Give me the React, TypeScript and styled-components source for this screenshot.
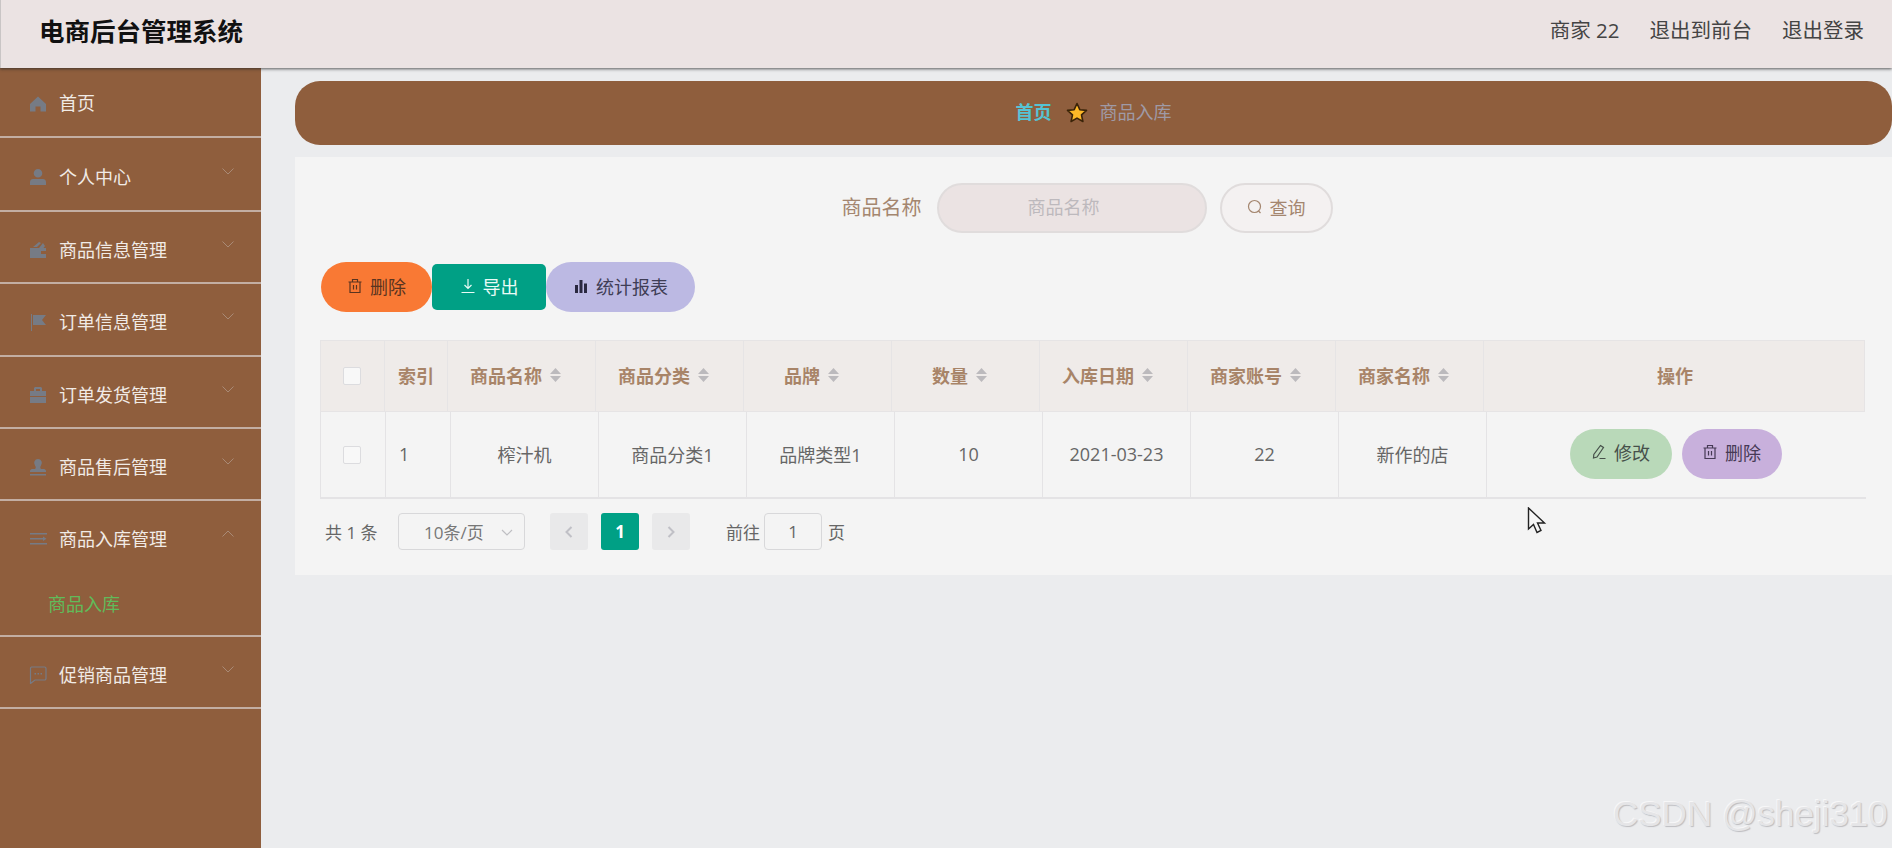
import React from 'react';
import styled, { createGlobalStyle } from 'styled-components';

const GlobalStyle = createGlobalStyle`
  html, body {
    margin: 0;
    padding: 0;
    height: 100%;
    overflow: hidden;
    background: #ebecee;
    font-family: "Open Sans", "Noto Sans CJK SC", sans-serif;
  }
  * { box-sizing: border-box; }
`;

const Root = styled.div`
  position: relative;
  display: flex;
  flex-direction: column;
  width: 1892px;
  height: 848px;
  overflow: hidden;
`;

const TopBar = styled.header`
  position: relative;
  z-index: 2;
  display: flex;
  align-items: center;
  justify-content: space-between;
  height: 68px;
  flex: none;
  padding: 0 28px 10px 38px;
  background: #ebe3e3;
  border-left: 1px solid #c9c5c5;
  box-shadow: 0 1px 3px rgba(40, 40, 40, 0.75);
`;

const Title = styled.div`
  font-size: 25.5px;
  font-weight: 700;
  color: #111;
`;

const TopLinks = styled.div`
  display: flex;
  gap: 30px;
  font-size: 20.5px;
  color: #444;
`;

const Body = styled.div`
  display: flex;
  flex: 1;
  min-height: 0;
`;

const Sidebar = styled.nav`
  width: 261px;
  flex: none;
  background: #8f5e3d;
`;

const MenuItem = styled.div<{ $h: number }>`
  height: ${(p) => p.$h}px;
  border-bottom: 2px solid #c3aea3;
`;

const MenuRow = styled.div<{ $h: number; $pt: number }>`
  display: flex;
  align-items: center;
  height: ${(p) => p.$h}px;
  padding: ${(p) => p.$pt}px 27px 0 29px;
  font-size: 18px;
  color: #f1ebe6;
`;

const MenuIcon = styled.svg`
  width: 18px;
  height: 18px;
  margin-right: 12px;
  fill: #767b85;
  flex: none;
`;

const MenuLabel = styled.span`
  flex: 1;
  margin-bottom: 3px;
`;

const Chevron = styled.svg`
  width: 12px;
  height: 7px;
  margin-bottom: 12px;
  fill: none;
  stroke: #a98a76;
  stroke-width: 1;
`;

const SubRow = styled.div`
  height: 62px;
  padding-left: 48px;
  line-height: 62px;
  font-size: 18px;
  color: #61bb5a;
`;

const Main = styled.main`
  flex: 1;
  min-width: 0;
  display: flex;
  flex-direction: column;
  padding: 13px 0 0 34px;
`;

const Crumbs = styled.div`
  display: flex;
  align-items: center;
  justify-content: center;
  height: 64px;
  padding: 0 0 5px 0;
  border-radius: 25px;
  background: #8f5e3d;
  font-size: 18px;
`;

const CrumbHome = styled.span`
  font-weight: 700;
  color: #55c3d4;
`;

const CrumbStar = styled.svg`
  width: 22px;
  height: 22px;
  margin: 4px 12px 0 14px;
`;

const CrumbCurrent = styled.span`
  color: #9f9aa6;
`;

const Card = styled.section`
  margin-top: 12px;
  height: 418px;
  padding: 26px 26px 0 25px;
  background: #f4f4f4;
`;

const SearchRow = styled.div`
  display: flex;
  align-items: center;
  justify-content: center;
  height: 50px;
  padding-right: 12px;
`;

const SearchLabel = styled.label`
  margin: 0 15px 3px 0;
  font-size: 20px;
  color: #a4866f;
`;

const SearchInput = styled.div`
  display: flex;
  align-items: center;
  justify-content: center;
  width: 270px;
  height: 50px;
  margin-right: 13px;
  padding: 0 16px 5px 0;
  border: 2px solid #e0dcdc;
  border-radius: 25px;
  background: #ebe3e3;
  font-size: 18px;
  color: #bdb9bd;
`;

const SearchButton = styled.button`
  display: flex;
  align-items: center;
  justify-content: center;
  gap: 7px;
  width: 113px;
  height: 50px;
  padding: 0 0 3px;
  border: 2px solid #e0dcdc;
  border-radius: 25px;
  background: #f4f1f1;
  font: inherit;
  font-size: 18px;
  color: #a4866f;
`;

const Toolbar = styled.div`
  display: flex;
  align-items: center;
  margin-top: 29px;
  padding-left: 1px;
  height: 50px;
`;

const Pill = styled.button<{ $bg: string; $fg: string; $w: number; $h?: number; $r?: number }>`
  display: inline-flex;
  align-items: center;
  justify-content: center;
  gap: 7px;
  width: ${(p) => p.$w}px;
  height: ${(p) => p.$h ?? 50}px;
  padding: 0 0 3px;
  border: 0;
  border-radius: ${(p) => p.$r ?? 25}px;
  background: ${(p) => p.$bg};
  font: inherit;
  font-size: 18px;
  color: ${(p) => p.$fg};
  flex: none;
`;

const BtnIcon = styled.svg`
  width: 16px;
  height: 16px;
  fill: none;
  stroke: currentColor;
  stroke-width: 1.2;
  flex: none;
`;

const Table = styled.div`
  margin-top: 28px;
  width: 1546px;
`;

const HeadRow = styled.div`
  display: grid;
  grid-template-columns: 64px 63px repeat(7, 148px) 382px;
  height: 72px;
  width: 1545px;
  background: #efebe9;
  border: 1px solid #e6e4e5;
`;

const HeadCell = styled.div<{ $sort?: boolean }>`
  display: flex;
  align-items: center;
  justify-content: center;
  gap: 7px;
  padding: 0 ${(p) => (p.$sort ? '11px' : '0')} 3px 0;
  border-right: 1px solid #e6e4e5;
  font-size: 18px;
  font-weight: 700;
  color: #a88468;

  &:last-child {
    border-right: 0;
  }
`;

const SortIcon = styled.svg`
  width: 13px;
  height: 16px;
  fill: #bcbabd;
  flex: none;
`;

const DataRow = styled.div`
  display: grid;
  grid-template-columns: 65px 65px repeat(7, 148px) 379px;
  height: 87px;
  border-left: 1px solid #e4e3e5;
  border-bottom: 2px solid #e4e3e5;
`;

const DataCell = styled.div<{ $left?: boolean }>`
  display: flex;
  align-items: center;
  justify-content: ${(p) => (p.$left ? 'flex-start' : 'center')};
  gap: 10px;
  padding: 0 0 2px ${(p) => (p.$left ? '13px' : '0')};
  border-right: 1px solid #e4e3e5;
  font-size: 18px;
  color: #666;

  &:last-child {
    border-right: 0;
  }
`;

const Check = styled.span`
  display: block;
  width: 18px;
  height: 18px;
  border: 1px solid #dcdcdf;
  border-radius: 2px;
  background: #f8f8f8;
`;

const HeadCheck = styled(Check)`
  margin: 3px 2px 0 0;
`;

const BodyCheck = styled(Check)`
  margin: 3px 3px 0 0;
`;

const ActionGroup = styled.div`
  display: flex;
  gap: 10px;
  margin-left: -2px;
`;

const Pager = styled.div`
  display: flex;
  align-items: center;
  margin-top: 14px;
  padding-left: 5px;
  font-size: 17px;
  color: #666;
`;

const PagerTotal = styled.span`
  width: 73px;
  white-space: pre;
`;

const PageSize = styled.div`
  position: relative;
  display: flex;
  align-items: center;
  width: 127px;
  height: 37px;
  margin-right: 25px;
  padding-left: 25px;
  border: 1px solid #d8d8da;
  border-radius: 4px;
  font-size: 17px;
  color: #777;
`;

const SizeCaret = styled.svg`
  position: absolute;
  right: 11px;
  top: 15px;
  width: 12px;
  height: 7px;
  fill: none;
  stroke: #bfbfc3;
  stroke-width: 1.2;
`;

const PageBtn = styled.div<{ $active?: boolean }>`
  display: flex;
  align-items: center;
  justify-content: center;
  width: 38px;
  height: 37px;
  margin-right: 13px;
  border-radius: 3px;
  background: ${(p) => (p.$active ? '#00a085' : '#e9e9ea')};
  font-size: 17px;
  font-weight: 700;
  color: #fff;
`;

const PageArrow = styled.svg`
  width: 10px;
  height: 14px;
  fill: none;
  stroke: #c0c0c6;
  stroke-width: 2;
`;

const JumpLabel = styled.span<{ $ml: number }>`
  margin-left: ${(p) => p.$ml}px;
`;

const JumpInput = styled.div`
  display: flex;
  align-items: center;
  justify-content: center;
  width: 58px;
  height: 37px;
  margin: 0 6px 0 4px;
  border: 1px solid #d8d8da;
  border-radius: 4px;
`;

const Cursor = styled.svg`
  position: absolute;
  left: 1527px;
  top: 507px;
  width: 20px;
  height: 28px;
`;

const Watermark = styled.div`
  position: absolute;
  left: 1613px;
  top: 794px;
  font-family: "Liberation Sans", sans-serif;
  font-size: 35px;
  white-space: nowrap;
  color: #e5e5e7;
  text-shadow: 1px 1px 1px #bdbdc0, -1px -1px 0 #f7f7f8;
`;

const icons: Record<string, React.ReactNode> = {
  home: <path d="M9 2.500 1 10v7.500h5.500v-5h5v5H17V10z" />,
  user: <path d="M9 1a4.300 4.300 0 1 1 0 8.600A4.300 4.300 0 0 1 9 1zM1 17v-3c0-2 1.500-3 3-3h10c1.500 0 3 1 3 3v3z" />,
  wallet: <path d="M1 7h9l4-5 2 3-1.500 2H17v3h-5v3h5v4H1zM4 6l6-5 2 1-4 4z" />,
  flag: <path d="M2 1h1v17H2zM4 2h13l-4 5 4 5H4z" />,
  case: <path d="M6 1h6l1 1v3h4v5H1V5h4V2zm1 2v2h4V3zM1 11h16v6H1z" />,
  stamp: <path d="M9 1a4 4 0 0 1 3 6.500c-1 1.500-1 2.500 0 3.500h3c1 0 2 1 2 2v1H1v-1c0-1 1-2 2-2h3c1-1 1-2 0-3.500A4 4 0 0 1 9 1zM1 16h16v1.500H1z" />,
  list: <path d="M1 3h17v1.500H1zM1 8h14v1.500H1zM1 13h17v1.500H1zM14 6.500 17.500 8.700 14 11z" />,
  chat: (
    <>
      <path
        d="M2.500 1h13A1.500 1.500 0 0 1 17 2.500v10a1.500 1.500 0 0 1-1.500 1.500H6l-4.500 3.500V2.500A1.500 1.500 0 0 1 2.500 1z"
        fill="none"
        stroke="#767b85"
        strokeWidth="1.200"
      />
      <path d="M5.500 7h1.500v1.500H5.500zM8.500 7H10v1.500H8.500zM11.500 7H13v1.500h-1.500z" />
    </>
  ),
};

const trash = (
  <BtnIcon viewBox="0 0 16 16">
    <path d="M1.500 4h13M5.500 4V1.500h5V4M3 4v10.500h10V4M6.500 7v4.500M9.500 7v4.500" />
  </BtnIcon>
);

const menus = [
  { icon: 'home', label: '首页', h: 70, rowH: 68, pt: 2, plain: true },
  { icon: 'user', label: '个人中心', h: 74, rowH: 72, pt: 6 },
  { icon: 'wallet', label: '商品信息管理', h: 72, rowH: 70, pt: 6 },
  { icon: 'flag', label: '订单信息管理', h: 73, rowH: 71, pt: 5 },
  { icon: 'case', label: '订单发货管理', h: 72, rowH: 70, pt: 6 },
  { icon: 'stamp', label: '商品售后管理', h: 72, rowH: 70, pt: 6 },
  { icon: 'list', label: '商品入库管理', h: 136, rowH: 72, pt: 4, open: true, sub: '商品入库' },
  { icon: 'chat', label: '促销商品管理', h: 72, rowH: 70, pt: 6 },
];

const columns = ['商品名称', '商品分类', '品牌', '数量', '入库日期', '商家账号', '商家名称'];
const row = ['榨汁机', '商品分类1', '品牌类型1', '10', '2021-03-23', '22', '新作的店'];

export default function App() {
  return (
    <Root>
      <GlobalStyle />
      <TopBar>
        <Title>电商后台管理系统</Title>
        <TopLinks>
          <span>商家 22</span>
          <span>退出到前台</span>
          <span>退出登录</span>
        </TopLinks>
      </TopBar>
      <Body>
        <Sidebar>
          {menus.map((m) => (
            <MenuItem key={m.label} $h={m.h}>
              <MenuRow $h={m.rowH} $pt={m.pt}>
                <MenuIcon viewBox="0 0 18 18">{icons[m.icon]}</MenuIcon>
                <MenuLabel>{m.label}</MenuLabel>
                {!m.plain && (
                  <Chevron viewBox="0 0 12 7">
                    <path d={m.open ? 'M.5 6.500 6 1l5.500 5.500' : 'M.5.500 6 6 11.500.500'} />
                  </Chevron>
                )}
              </MenuRow>
              {m.sub && <SubRow>{m.sub}</SubRow>}
            </MenuItem>
          ))}
        </Sidebar>
        <Main>
          <Crumbs>
            <CrumbHome>首页</CrumbHome>
            <CrumbStar viewBox="0 0 22 22">
              <path
                d="M11 1.500l2.800 6.200 6.700.7-5 4.500 1.400 6.600-5.900-3.400-5.900 3.400 1.400-6.600-5-4.500 6.700-.7z"
                fill="#fdb827"
                stroke="#3a2308"
                strokeWidth="1.600"
                strokeLinejoin="round"
              />
            </CrumbStar>
            <CrumbCurrent>商品入库</CrumbCurrent>
          </Crumbs>
          <Card>
            <SearchRow>
              <SearchLabel>商品名称</SearchLabel>
              <SearchInput>商品名称</SearchInput>
              <SearchButton>
                <BtnIcon viewBox="0 0 16 16">
                  <circle cx="7.500" cy="7.500" r="6" />
                  <path d="M11.500 12l2 2" />
                </BtnIcon>
                查询
              </SearchButton>
            </SearchRow>
            <Toolbar>
              <Pill $bg="#f97934" $fg="#5a3420" $w={111}>
                {trash}
                删除
              </Pill>
              <Pill $bg="#00a085" $fg="#e9fbf6" $w={114} $h={46} $r={5}>
                <BtnIcon viewBox="0 0 16 16">
                  <path d="M8 1v9.500M4.500 7 8 10.500 11.500 7M1.500 14.500h13" />
                </BtnIcon>
                导出
              </Pill>
              <Pill $bg="#bcb9e3" $fg="#3f3d55" $w={149}>
                <BtnIcon viewBox="0 0 16 16">
                  <path fill="#2a2840" stroke="none" d="M2 7h3v8H2zM6.500 2h3v13h-3zM11 5.500h3V15h-3z" />
                </BtnIcon>
                统计报表
              </Pill>
            </Toolbar>
            <Table>
              <HeadRow>
                <HeadCell>
                  <HeadCheck />
                </HeadCell>
                <HeadCell>索引</HeadCell>
                {columns.map((c) => (
                  <HeadCell key={c} $sort>
                    {c}
                    <SortIcon viewBox="0 0 13 16">
                      <path d="M6.500 1 12 7H1zM1 9h11l-5.500 6z" />
                    </SortIcon>
                  </HeadCell>
                ))}
                <HeadCell>操作</HeadCell>
              </HeadRow>
              <DataRow>
                <DataCell>
                  <BodyCheck />
                </DataCell>
                <DataCell $left>1</DataCell>
                {row.map((v) => (
                  <DataCell key={v}>{v}</DataCell>
                ))}
                <DataCell>
                  <ActionGroup>
                    <Pill $bg="#b9d9b9" $fg="#46504a" $w={102}>
                      <BtnIcon viewBox="0 0 16 16">
                        <path d="M9.500 1.500l3 2-6.500 9.500-3.500 1 .3-3.500zM8.500 14.500h6" />
                      </BtnIcon>
                      修改
                    </Pill>
                    <Pill $bg="#c8b0dc" $fg="#463a55" $w={100}>
                      {trash}
                      删除
                    </Pill>
                  </ActionGroup>
                </DataCell>
              </DataRow>
            </Table>
            <Pager>
              <PagerTotal>共 1 条</PagerTotal>
              <PageSize>
                10条/页
                <SizeCaret viewBox="0 0 12 7">
                  <path d="M1 1l5 5 5-5" />
                </SizeCaret>
              </PageSize>
              <PageBtn>
                <PageArrow viewBox="0 0 10 14">
                  <path d="M7.500 2 2.500 7l5 5" />
                </PageArrow>
              </PageBtn>
              <PageBtn $active>1</PageBtn>
              <PageBtn>
                <PageArrow viewBox="0 0 10 14">
                  <path d="M2.500 2l5 5-5 5" />
                </PageArrow>
              </PageBtn>
              <JumpLabel $ml={23}>前往</JumpLabel>
              <JumpInput>1</JumpInput>
              <span>页</span>
            </Pager>
          </Card>
        </Main>
      </Body>
      <Cursor viewBox="0 0 20 28">
        <path d="M1.500 1v21l5-4.500 3.500 8 4-2-3.500-7.500h7z" fill="#f6f6f6" stroke="#222" strokeWidth="1.400" />
      </Cursor>
      <Watermark>CSDN @sheji310</Watermark>
    </Root>
  );
}
